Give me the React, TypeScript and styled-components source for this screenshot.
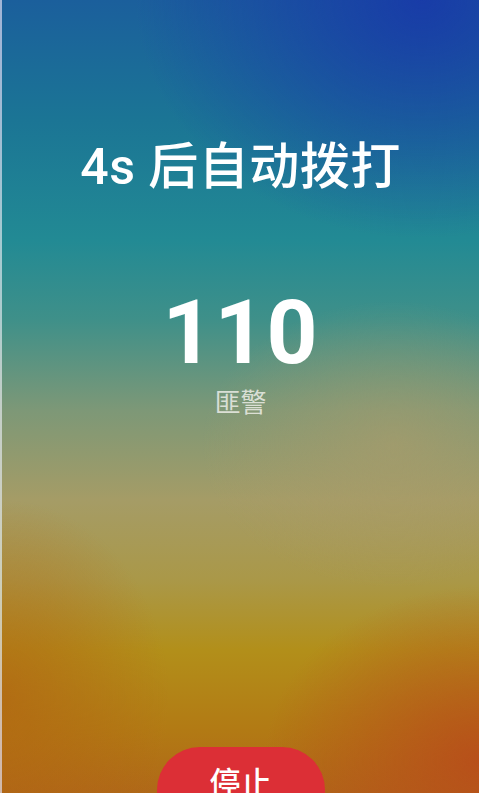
import React from 'react';
import styled, { createGlobalStyle } from 'styled-components';

const GlobalStyle = createGlobalStyle`
  html, body {
    margin: 0;
    padding: 0;
    height: 100%;
  }
  body {
    font-family: Roboto, "Noto Sans CJK SC", sans-serif;
    -webkit-font-smoothing: antialiased;
  }
`;

const Screen = styled.div`
  position: relative;
  width: 100%;
  height: 793px;
  overflow: hidden;
  display: flex;
  flex-direction: column;
  align-items: center;
  box-sizing: border-box;
  padding-top: 137px;
  border-left: 2px solid rgba(220, 230, 235, 0.7);
  background:
    radial-gradient(ellipse 60% 30% at 88% 0%, rgba(24, 58, 168, 0.95), rgba(24, 58, 168, 0) 100%),
    radial-gradient(ellipse 45% 22% at 100% 96%, rgba(184, 78, 26, 0.95), rgba(184, 78, 26, 0) 100%),
    radial-gradient(ellipse 35% 25% at 0% 88%, rgba(178, 100, 18, 0.7), rgba(178, 100, 18, 0) 100%),
    radial-gradient(ellipse 40% 18% at 82% 56%, rgba(172, 156, 106, 0.6), rgba(172, 156, 106, 0) 100%),
    linear-gradient(
      180deg,
      #1b5f9c 0px,
      #1b7595 120px,
      #228a94 240px,
      #3f9089 320px,
      #7d9877 410px,
      #a59c66 500px,
      #aa9848 580px,
      #b28f1a 650px,
      #b27a14 730px,
      #b06818 793px
    );
`;

const Countdown = styled.h1`
  margin: 0;
  color: #ffffff;
  font-size: 50px;
  font-weight: 500;
  line-height: 60px;
  letter-spacing: 0.5px;
`;

const Number = styled.div`
  margin-top: 86px;
  color: #ffffff;
  font-family: Roboto, sans-serif;
  font-size: 89px;
  font-weight: 700;
  line-height: 100px;
  letter-spacing: 1px;
`;

const Label = styled.div`
  margin-top: 4px;
  color: rgba(240, 240, 235, 0.82);
  font-size: 26px;
  line-height: 32px;
`;

const StopButton = styled.button`
  margin-top: auto;
  margin-bottom: -40px;
  width: 168px;
  height: 86px;
  border: none;
  border-radius: 43px;
  background: #dc2f36;
  color: #ffffff;
  font-family: "Noto Sans CJK SC", sans-serif;
  font-size: 31px;
  font-weight: 500;
  line-height: 1;
  display: flex;
  justify-content: center;
  align-items: flex-start;
  padding-top: 18px;
  cursor: pointer;
`;

const App: React.FC = () => {
  const [seconds] = React.useState(4);

  return (
    <>
      <GlobalStyle />
      <Screen>
        <Countdown>{seconds}s 后自动拨打</Countdown>
        <Number>110</Number>
        <Label>匪警</Label>
        <StopButton>停止</StopButton>
      </Screen>
    </>
  );
};

export default App;
